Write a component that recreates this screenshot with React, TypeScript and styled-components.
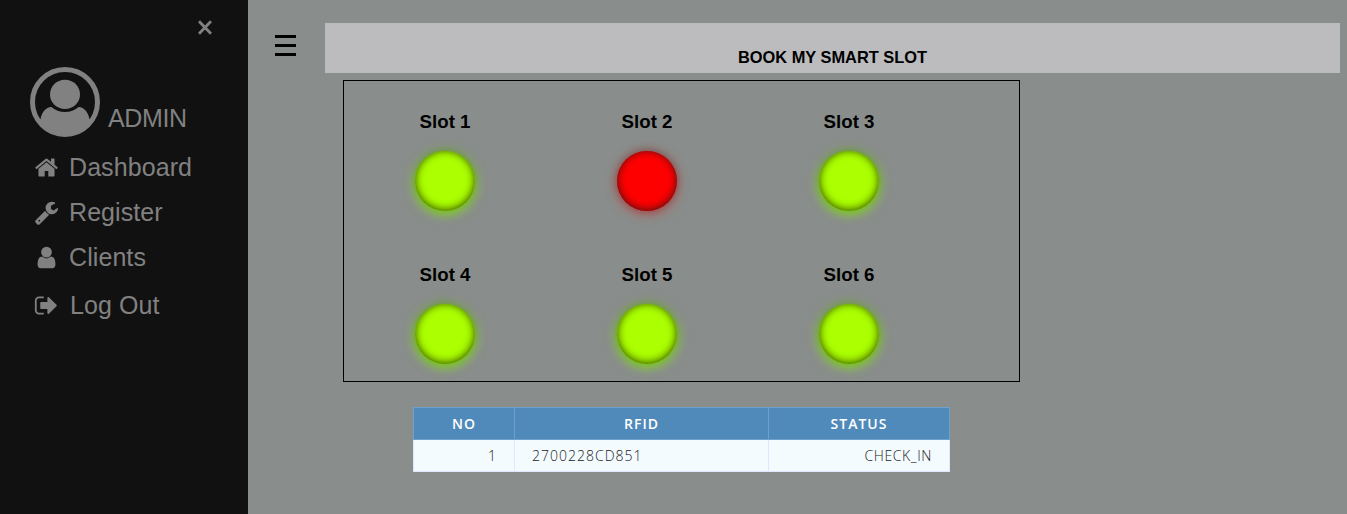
import React from "react";
import styled, { createGlobalStyle } from "styled-components";

const GlobalStyle = createGlobalStyle`
  * { box-sizing: border-box; }
  body {
    margin: 0;
    background: #898d8b;
    font-family: "Liberation Sans", Arial, sans-serif;
    overflow: hidden;
  }
`;

const Page = styled.div`
  display: flex;
  height: 100vh;
`;

const Sidebar = styled.aside`
  flex: 0 0 248px;
  background: #111;
  color: #818181;
  display: flex;
  flex-direction: column;
`;

const CloseRow = styled.div`
  display: flex;
  justify-content: flex-end;
  padding: 20px 36px 0 0;
  height: 67px;
`;

const Profile = styled.div`
  display: flex;
  align-items: flex-end;
  gap: 8px;
  height: 70px;
  padding-left: 30px;
  font-size: 25px;
  line-height: 29px;
  margin-bottom: 16px;
`;

const ProfileName = styled.span`
  padding-bottom: 4px;
  letter-spacing: -0.35px;
`;

const Nav = styled.nav`
  display: flex;
  flex-direction: column;
`;

const NavItem = styled.a<{ $last?: boolean }>`
  display: flex;
  align-items: center;
  gap: ${(p) => (p.$last ? 11 : 10)}px;
  height: 29px;
  padding-left: 34px;
  margin-bottom: 16px;
  margin-top: ${(p) => (p.$last ? 3 : 0)}px;
  font-size: 25px;
  line-height: 29px;
  letter-spacing: 0.08px;
`;

const Main = styled.main`
  flex: 1;
  display: flex;
  padding: 23px 7px 0 27px;
`;

const MenuButton = styled.div`
  display: flex;
  flex-direction: column;
  gap: 6px;
  width: 21px;
  margin: 12px 29px 0 0;
`;

const Bar = styled.span`
  height: 3px;
  background: #000;
`;

const Content = styled.div`
  flex: 1;
`;

const Title = styled.h1`
  margin: 0;
  height: 50px;
  padding-top: 25px;
  background: #bcbcbe;
  color: #000;
  font-size: 16.4px;
  line-height: 19px;
  text-align: center;
`;

const SlotPanel = styled.section`
  width: 677px;
  height: 302px;
  margin: 7px 0 25px 18px;
  border: 1px solid #000;
  display: grid;
  grid-template-columns: repeat(3, 202px);
  grid-auto-rows: 153px;
`;

const Slot = styled.div`
  display: flex;
  flex-direction: column;
  align-items: center;
  padding-top: 30px;
`;

const SlotName = styled.h3`
  margin: 0 0 19px;
  color: #000;
  font-size: 18.72px;
  line-height: 21px;
`;

const Led = styled.div<{ $busy: boolean }>`
  width: 60px;
  height: 60px;
  border-radius: 50%;
  background: ${(p) => (p.$busy ? "#f00" : "#abff00")};
  box-shadow: ${(p) =>
    p.$busy
      ? "rgba(0,0,0,.2) 0 -1px 7px 1px, inset #441313 0 -1px 9px, rgba(255,0,0,.5) 0 2px 12px"
      : "rgba(0,0,0,.2) 0 -1px 7px 1px, inset #304701 0 -1px 9px, #89ff00 0 2px 12px"};
`;

const Table = styled.table`
  width: 537px;
  margin-left: 88px;
  table-layout: fixed;
  border-collapse: collapse;
  font-family: "Open Sans", sans-serif;
  font-size: 14px;
  line-height: 20px;
  letter-spacing: 1px;
`;

const Col = styled.col<{ $w: number }>`
  width: ${(p) => p.$w}px;
`;

const HeadCell = styled.th`
  height: 32px;
  padding: 0;
  background: #508abb;
  border: 1px solid #6ea1cc;
  color: #fff;
  font-weight: 600;
`;

const Cell = styled.td<{ $right?: boolean; $tight?: boolean }>`
  height: 32px;
  padding: 0 17px;
  background: #f4fbff;
  border: 1px solid #e0e8ff;
  color: #222;
  font-weight: 300;
  letter-spacing: ${(p) => (p.$tight ? 0.6 : 1)}px;
  text-align: ${(p) => (p.$right ? "right" : "left")};
`;

const Glyph = ({ d }: { d: string }) => (
  <svg width="25" height="25" viewBox="0 0 1792 1792" fill="currentColor">
    <path d={d} />
  </svg>
);

const home =
  "M1472 992v480q0 26-19 45t-45 19h-384v-384h-256v384h-384q-26 0-45-19t-19-45v-480q0-1 .5-3t.5-3l575-474 575 474q1 2 1 6zm223-69l-62 74q-8 9-21 11h-3q-13 0-21-7l-692-577-692 577q-12 8-24 7-13-2-21-11l-62-74q-8-10-7-23.5t11-21.5l719-599q32-26 76-26t76 26l244 204v-195q0-14 9-23t23-9h192q14 0 23 9t9 23v408l219 182q10 8 11 21.5t-7 23.5z";
const wrench =
  "M448 1472q0-26-19-45t-45-19-45 19-19 45 19 45 45 19 45-19 19-45zm644-420l-682 682q-37 37-90 37-52 0-91-37l-106-108q-38-36-38-90 0-53 38-91l681-681q39 98 114.5 173.5t173.5 114.5zm634-435q0 39-23 106-47 134-164.5 217.5t-258.5 83.5q-185 0-316.5-131.5t-131.5-316.5 131.5-316.5 316.5-131.5q58 0 121.5 16.5t107.5 46.5q16 11 16 28t-16 28l-293 169v224l193 107q5-3 79-48.5t135.5-81 70.5-35.5q15 0 23.5 10t8.5 25z";
const user =
  "M1536 1399q0 109-62.5 187t-150.5 78h-854q-88 0-150.5-78t-62.5-187q0-85 8.5-160.5t31.5-152 58.5-131 94-89 134.5-34.5q131 128 313 128t313-128q76 0 134.5 34.5t94 89 58.5 131 31.5 152 8.5 160.5zm-256-887q0 159-112.5 271.5t-271.5 112.5-271.5-112.5-112.5-271.5 112.5-271.5 271.5-112.5 271.5 112.5 112.5 271.5z";
const signOut =
  "M704 1440q0 4 1 20t.5 26.5-3 23.5-10 19.5-20.5 6.5h-320q-119 0-203.5-84.5t-84.5-203.5v-704q0-119 84.5-203.5t203.5-84.5h320q13 0 22.5 9.5t9.5 22.5q0 4 1 20t.5 26.5-3 23.5-10 19.5-20.5 6.5h-320q-66 0-113 47t-47 113v704q0 66 47 113t113 47h312l11.5 1 11.5 3 8 5.5 7 9 2 13.5zm928-544q0 26-19 45l-544 544q-19 19-45 19t-45-19-19-45v-288h-448q-26 0-45-19t-19-45v-384q0-26 19-45t45-19h448v-288q0-26 19-45t45-19 45 19l544 544q19 19 19 45z";

const navItems = [
  { label: "Dashboard", icon: home },
  { label: "Register", icon: wrench },
  { label: "Clients", icon: user },
  { label: "Log Out", icon: signOut },
];

const slots = [false, true, false, false, false, false];

export default function App() {
  return (
    <Page>
      <GlobalStyle />
      <Sidebar>
        <CloseRow>
          <svg width="14" height="15" viewBox="0 0 14 15" stroke="currentColor" strokeWidth="2.9">
            <path d="M1 1.3 13 13.7M13 1.3 1 13.7" />
          </svg>
        </CloseRow>
        <Profile>
          <svg width="70" height="70" viewBox="0 0 70 70" fill="currentColor">
            <circle cx="35" cy="35" r="32.5" fill="none" stroke="currentColor" strokeWidth="5" />
            <path d="M35 12.800C43.500 12.800 50 19.500 50 27.500S43.500 42 35 42 20 35.500 20 27.500 26.500 12.800 35 12.800Z" />
            <path d="M10.500 52C12 45 15.500 40.500 21.500 40Q27 45 35 45T48.500 40C54.500 40.500 58 45 59.500 52L62 54Q52 69 35 69T8 54Z" />
          </svg>
          <ProfileName>ADMIN</ProfileName>
        </Profile>
        <Nav>
          {navItems.map((n, i) => (
            <NavItem key={n.label} $last={i === 3}>
              <Glyph d={n.icon} />
              {n.label}
            </NavItem>
          ))}
        </Nav>
      </Sidebar>
      <Main>
        <MenuButton>
          <Bar />
          <Bar />
          <Bar />
        </MenuButton>
        <Content>
          <Title>BOOK MY SMART SLOT</Title>
          <SlotPanel>
            {slots.map((busy, i) => (
              <Slot key={i}>
                <SlotName>Slot {i + 1}</SlotName>
                <Led $busy={busy} />
              </Slot>
            ))}
          </SlotPanel>
          <Table>
            <colgroup>
              <Col $w={101} />
              <Col $w={254} />
              <Col $w={181} />
            </colgroup>
            <thead>
              <tr>
                <HeadCell>NO</HeadCell>
                <HeadCell>RFID</HeadCell>
                <HeadCell>STATUS</HeadCell>
              </tr>
            </thead>
            <tbody>
              <tr>
                <Cell $right>1</Cell>
                <Cell>2700228CD851</Cell>
                <Cell $right $tight>
                  CHECK_IN
                </Cell>
              </tr>
            </tbody>
          </Table>
        </Content>
      </Main>
    </Page>
  );
}
